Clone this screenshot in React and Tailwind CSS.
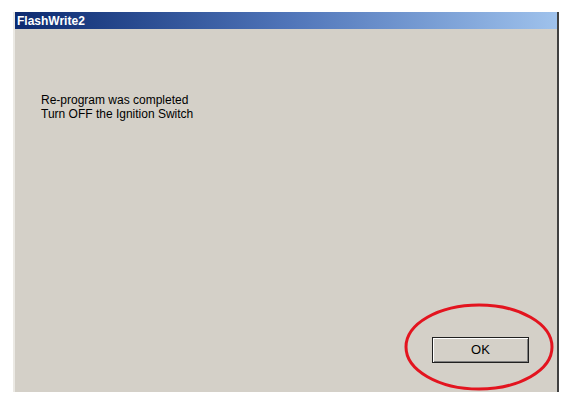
export default function App() {
  return (
    <div className="w-[571px] h-[405px] bg-white pt-[12px] pl-[13px] relative" style={{ fontFamily: '"Liberation Sans", Arial, sans-serif' }}>
      <div className="w-[546px] h-[380px] flex flex-col bg-[#d4d0c8] border-l-[2px] border-l-[#ebe9e4] border-r-[2px] border-r-[#404040]">
        <div className="h-[17px] flex items-center pl-[2px] bg-gradient-to-r from-[#0c2a70] via-[#4f74b8] to-[#9fc2ec]">
          <span className="text-white font-bold text-[12px] leading-none">FlashWrite2</span>
        </div>
        <div className="flex-1 flex flex-col pt-[64px] pl-[26px] pr-[28px] pb-[29px]">
          <div className="text-[12px] leading-[14px] text-black">
            <div>Re-program was completed</div>
            <div>Turn OFF the Ignition Switch</div>
          </div>
          <div className="flex-1" />
          <div className="flex justify-end">
            <div className="w-[97px] h-[26px] border border-[#202020] bg-[#d4d0c8] shadow-[inset_1px_1px_0_#ffffff,inset_-1px_-1px_0_#808080] flex items-center justify-center text-[13px] text-black">
              OK
            </div>
          </div>
        </div>
      </div>
      <svg className="absolute left-0 top-0 pointer-events-none" width="571" height="405" viewBox="0 0 571 405">
        <ellipse cx="479" cy="347" rx="73" ry="42" fill="none" stroke="#e3141f" strokeWidth="3" />
      </svg>
    </div>
  );
}
